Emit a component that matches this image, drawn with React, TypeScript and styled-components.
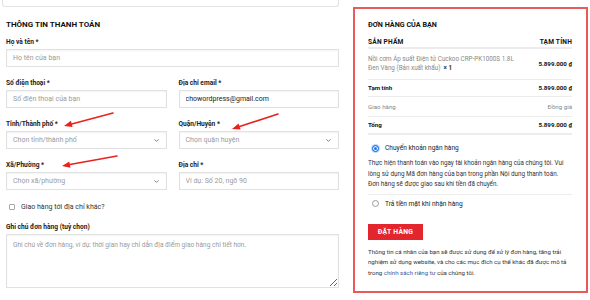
import React, { FC } from 'react'
import styled, { createGlobalStyle } from 'styled-components'
import { ChevronDown } from 'lucide-react'

const GlobalStyle = createGlobalStyle`
  * { box-sizing: border-box; }
  html, body {
    margin: 0;
    padding: 0;
    background: #fff;
  }
  body {
    width: 590px;
    height: 300px;
    overflow: hidden;
    font-family: Roboto, 'Liberation Sans', Arial, sans-serif;
    color: #222;
  }
`

const Page = styled.div`
  position: relative;
  display: flex;
  align-items: flex-start;
  gap: 14px;
  padding-left: 2px;
  width: 590px;
  height: 300px;
`

const LeftCol = styled.div`
  width: 337px;
  flex: none;
`

const NoticeBox = styled.div`
  height: 7px;
  border: 1px solid #e2e2e2;
  border-top: none;
  border-radius: 0 0 3px 3px;
`

const Form = styled.div`
  padding-left: 4px;
`

const Heading = styled.h3`
  margin: 12px 0 6px;
  font-size: 8px;
  line-height: 12px;
  font-weight: 700;
  color: #111;
  text-transform: uppercase;
`

const Row = styled.div<{ $cols?: number; $last?: boolean }>`
  display: grid;
  grid-template-columns: ${({ $cols }) => ($cols === 2 ? '1fr 1fr' : '1fr')};
  column-gap: 12px;
  margin-bottom: ${({ $last }) => ($last ? 0 : 11)}px;
`

const Field = styled.div`
  display: flex;
  flex-direction: column;
`

const Label = styled.label`
  display: block;
  margin-bottom: 2px;
  font-size: 6.6px;
  line-height: 10px;
  font-weight: 700;
  color: #222;
`

const Input = styled.input`
  height: 18px;
  width: 100%;
  padding: 0 6px;
  border: 1px solid #e1e1e1;
  border-radius: 0;
  box-shadow: inset 0 1px 2px rgba(0, 0, 0, 0.05);
  font-family: inherit;
  font-size: 7px;
  color: #222;
  outline: none;
  &::placeholder {
    color: #9b9b9b;
  }
`

const SelectBox = styled.div`
  display: flex;
  align-items: center;
  justify-content: space-between;
  height: 18px;
  padding: 0 6px;
  border: 1px solid #e1e1e1;
  box-shadow: inset 0 1px 2px rgba(0, 0, 0, 0.05);
  font-size: 7px;
  color: #9b9b9b;
  svg {
    color: #555;
  }
`

const CheckRow = styled.label`
  display: flex;
  align-items: center;
  gap: 6px;
  margin: 12px 0 10px 3px;
  font-size: 7px;
  line-height: 10px;
  color: #333;
`

const CheckBox = styled.span`
  width: 6px;
  height: 6px;
  border: 1px solid #a8a8a8;
  border-radius: 1px;
  background: #fff;
`

const TextArea = styled.textarea`
  display: block;
  width: 100%;
  height: 54px;
  padding: 5px 6px;
  border: 1px solid #e1e1e1;
  box-shadow: inset 0 1px 2px rgba(0, 0, 0, 0.05);
  font-family: inherit;
  font-size: 6.6px;
  line-height: 10px;
  resize: vertical;
  outline: none;
  &::placeholder {
    color: #9b9b9b;
  }
`

const OrderPanel = styled.div`
  width: 235px;
  height: 286px;
  flex: none;
  margin-top: 7px;
  padding: 10px 14px 0 13px;
  border: 2px solid #e95b5b;
`

const PanelTitle = styled.h3`
  margin: 0 0 6px;
  font-size: 7.2px;
  line-height: 12px;
  font-weight: 700;
  color: #111;
`

const TableRow = styled.div<{ $head?: boolean; $thick?: boolean; $pad?: number }>`
  display: flex;
  align-items: center;
  justify-content: space-between;
  gap: 10px;
  padding: ${({ $pad }) => $pad ?? 3}px 0;
  border-bottom: ${({ $thick }) => ($thick ? 2 : 1)}px solid #ececec;
  font-size: ${({ $head }) => ($head ? 6.6 : 6.2)}px;
  line-height: 10px;
`

const HeadCell = styled.span`
  font-weight: 700;
  color: #111;
  letter-spacing: 0.2px;
`

const ItemName = styled.span`
  width: 152px;
  color: #888;
  line-height: 9.5px;
  font-size: 6.3px;
`

const Qty = styled.strong`
  color: #333;
  font-weight: 700;
`

const Cell = styled.span<{ $bold?: boolean; $muted?: boolean }>`
  font-weight: ${({ $bold }) => ($bold ? 700 : 400)};
  color: ${({ $muted }) => ($muted ? '#888' : '#111')};
  white-space: nowrap;
`

const Method = styled.label`
  display: flex;
  align-items: center;
  gap: 6px;
  padding-left: 4px;
  font-size: 6.6px;
  line-height: 10px;
  color: #222;
`

const Radio = styled.span<{ $checked?: boolean }>`
  width: 7px;
  height: 7px;
  border-radius: 50%;
  border: ${({ $checked }) => ($checked ? '1.5px solid #1a73e8' : '1px solid #9a9a9a')};
  background: ${({ $checked }) => ($checked ? '#1a73e8' : '#fff')};
  box-shadow: ${({ $checked }) =>
    $checked ? 'inset 0 0 0 1px #fff, 0 0 0 1px rgba(26,115,232,.25)' : 'none'};
`

const MethodList = styled.div`
  margin-top: 8px;
`

const MethodBox = styled.div`
  padding-bottom: 4px;
  border-bottom: 1px solid #ececec;
`

const MethodDesc = styled.p`
  margin: 5px 0 0;
  font-size: 6.3px;
  line-height: 10.5px;
  color: #333;
`

const SecondMethod = styled.div`
  margin-top: 4px;
`

const OrderButton = styled.button`
  display: block;
  margin-top: 15px;
  width: 55px;
  height: 16px;
  padding: 0;
  border: none;
  background: #e3262e;
  color: #fff;
  font-family: inherit;
  font-size: 6.8px;
  font-weight: 700;
  letter-spacing: 0.3px;
`

const Privacy = styled.p`
  margin: 7px 0 0;
  font-size: 6.1px;
  line-height: 10.5px;
  color: #333;
  a {
    color: #3b5b9a;
    text-decoration: none;
  }
`

const Overlay = styled.svg`
  position: absolute;
  top: 0;
  left: 0;
  pointer-events: none;
`

interface ArrowProps {
  x1: number
  y1: number
  x2: number
  y2: number
}

const Arrow: FC<ArrowProps> = ({ x1, y1, x2, y2 }) => {
  const a = Math.atan2(y2 - y1, x2 - x1)
  const len = 8
  const w = 3.2
  const bx = x2 - Math.cos(a) * len
  const by = y2 - Math.sin(a) * len
  const px = -Math.sin(a) * w
  const py = Math.cos(a) * w
  return (
    <g>
      <line x1={x1} y1={y1} x2={bx} y2={by} stroke="#e8231d" strokeWidth={1.6} strokeLinecap="round" />
      <polygon points={`${x2},${y2} ${bx + px},${by + py} ${bx - px},${by - py}`} fill="#e8231d" />
    </g>
  )
}

const Select: FC<{ placeholder: string }> = ({ placeholder }) => (
  <SelectBox>
    <span>{placeholder}</span>
    <ChevronDown size={7} strokeWidth={2.5} />
  </SelectBox>
)

const App: FC = () => (
  <>
    <GlobalStyle />
    <Page>
      <LeftCol>
        <NoticeBox />
        <Form>
          <Heading>Thông tin thanh toán</Heading>

          <Row>
            <Field>
              <Label>Họ và tên *</Label>
              <Input placeholder="Họ tên của bạn" />
            </Field>
          </Row>

          <Row $cols={2}>
            <Field>
              <Label>Số điện thoại *</Label>
              <Input placeholder="Số điện thoại của bạn" />
            </Field>
            <Field>
              <Label>Địa chỉ email *</Label>
              <Input defaultValue="chowordpress@gmail.com" />
            </Field>
          </Row>

          <Row $cols={2}>
            <Field>
              <Label>Tỉnh/Thành phố *</Label>
              <Select placeholder="Chọn tỉnh/thành phố" />
            </Field>
            <Field>
              <Label>Quận/Huyện *</Label>
              <Select placeholder="Chọn quận huyện" />
            </Field>
          </Row>

          <Row $cols={2} $last>
            <Field>
              <Label>Xã/Phường *</Label>
              <Select placeholder="Chọn xã/phường" />
            </Field>
            <Field>
              <Label>Địa chỉ *</Label>
              <Input placeholder="Ví dụ: Số 20, ngõ 90" />
            </Field>
          </Row>

          <CheckRow>
            <CheckBox />
            Giao hàng tới địa chỉ khác?
          </CheckRow>

          <Label>Ghi chú đơn hàng (tuỳ chọn)</Label>
          <TextArea placeholder="Ghi chú về đơn hàng, ví dụ: thời gian hay chỉ dẫn địa điểm giao hàng chi tiết hơn." />
        </Form>
      </LeftCol>

      <OrderPanel>
        <PanelTitle>ĐƠN HÀNG CỦA BẠN</PanelTitle>

        <TableRow $head $thick $pad={0}>
          <HeadCell>SẢN PHẨM</HeadCell>
          <HeadCell>TẠM TÍNH</HeadCell>
        </TableRow>

        <TableRow $pad={5.5}>
          <ItemName>
            Nồi cơm Áp suất Điện tử Cuckoo CRP-PK1000S 1.8L Đen Vàng (Bản xuất khẩu)&nbsp; <Qty>× 1</Qty>
          </ItemName>
          <Cell $bold>5.899.000 ₫</Cell>
        </TableRow>

        <TableRow>
          <Cell $bold>Tạm tính</Cell>
          <Cell $bold>5.899.000 ₫</Cell>
        </TableRow>

        <TableRow $pad={4.5}>
          <Cell $muted>Giao hàng</Cell>
          <Cell $muted>Đồng giá</Cell>
        </TableRow>

        <TableRow $thick>
          <Cell $bold>Tổng</Cell>
          <Cell $bold>5.899.000 ₫</Cell>
        </TableRow>

        <MethodList>
          <MethodBox>
            <Method>
              <Radio $checked />
              Chuyển khoản ngân hàng
            </Method>
            <MethodDesc>
              Thực hiện thanh toán vào ngay tài khoản ngân hàng của chúng tôi. Vui
              <br />
              lòng sử dụng Mã đơn hàng của bạn trong phần Nội dung thanh toán.
              <br />
              Đơn hàng sẽ được giao sau khi tiền đã chuyển.
            </MethodDesc>
          </MethodBox>
          <SecondMethod>
            <Method>
              <Radio />
              Trả tiền mặt khi nhận hàng
            </Method>
          </SecondMethod>
        </MethodList>

        <OrderButton>ĐẶT HÀNG</OrderButton>

        <Privacy>
          Thông tin cá nhân của bạn sẽ được sử dụng để xử lý đơn hàng, tăng trải nghiệm sử dụng
          website, và cho các mục đích cụ thể khác đã được mô tả trong <a href="#">chính sách riêng tư</a>{' '}
          của chúng tôi.
        </Privacy>
      </OrderPanel>

      <Overlay width={590} height={300} viewBox="0 0 590 300">
        <Arrow x1={113} y1={113} x2={64} y2={126} />
        <Arrow x1={278} y1={114} x2={232} y2={129} />
        <Arrow x1={117} y1={156} x2={62} y2={166} />
      </Overlay>
    </Page>
  </>
)

export default App
